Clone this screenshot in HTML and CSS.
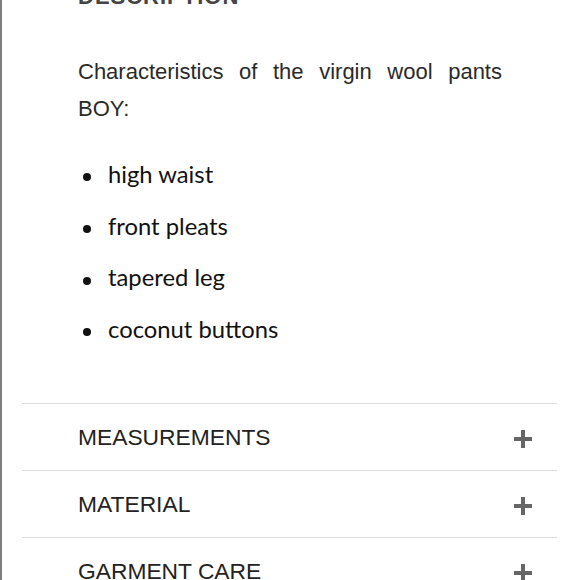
FILE: index.html
```html
<!DOCTYPE html>
<html lang="en">
<head>
<meta charset="utf-8">
<title>Description</title>
<link rel="stylesheet" href="styles.css">
</head>
<body>
<div class="page">
  <section class="description">
    <h2 class="description-title">DESCRIPTION</h2>
    <p class="description-text">Characteristics of the virgin wool pants BOY:</p>
    <ul class="features">
      <li>high waist</li>
      <li>front pleats</li>
      <li>tapered leg</li>
      <li>coconut buttons</li>
    </ul>
  </section>
  <div class="accordion">
    <div class="acc-row"><span class="acc-label">MEASUREMENTS</span><span class="plus" aria-hidden="true"></span></div>
    <div class="acc-row"><span class="acc-label">MATERIAL</span><span class="plus" aria-hidden="true"></span></div>
    <div class="acc-row"><span class="acc-label">GARMENT CARE</span><span class="plus" aria-hidden="true"></span></div>
  </div>
</div>
</body>
</html>
```

FILE: styles.css
```css
html, body {
  margin: 0;
  padding: 0;
  background: #fff;
  overflow: hidden;
}
body {
  font-family: "Liberation Sans", Arial, sans-serif;
}
.page {
  border-left: 2px solid #7d7d7d;
  min-height: 100vh;
  box-sizing: border-box;
}
.description {
  padding-left: 76px;
}
.description-title {
  margin: -16px 0 0 0;
  font-size: 22px;
  line-height: 26px;
  font-weight: bold;
  letter-spacing: 1px;
  color: #444;
}
.description-text {
  margin: 43px 0 0 0;
  width: 424px;
  font-size: 22px;
  line-height: 37px;
  text-align: justify;
  color: #2a2a2a;
}
.features {
  list-style: none;
  margin: 22px 0 0 5px;
  padding: 0;
  font-family: Lato, "Liberation Sans", sans-serif;
  font-size: 23.8px;
  line-height: 51.7px;
  color: #111;
}
.features li {
  display: flex;
  align-items: center;
  gap: 17px;
}
.features li::before {
  content: "";
  width: 8px;
  height: 8px;
  border-radius: 50%;
  background: #111;
  margin-top: 5px;
  flex: none;
}
.accordion {
  margin: 47px 23px 0 20px;
}
.acc-row {
  display: flex;
  align-items: center;
  justify-content: space-between;
  height: 66px;
  border-top: 1px solid #dcdcdc;
  padding: 0 25px 0 56px;
}
.acc-label {
  font-size: 22.8px;
  color: #222;
  padding-top: 2px;
}
.plus {
  position: relative;
  width: 18px;
  height: 18px;
  margin-top: 4px;
}
.plus::before,
.plus::after {
  content: "";
  position: absolute;
  background: #666;
}
.plus::before {
  left: 0;
  top: 7px;
  width: 18px;
  height: 4px;
}
.plus::after {
  top: 0;
  left: 7px;
  width: 4px;
  height: 18px;
}
```
